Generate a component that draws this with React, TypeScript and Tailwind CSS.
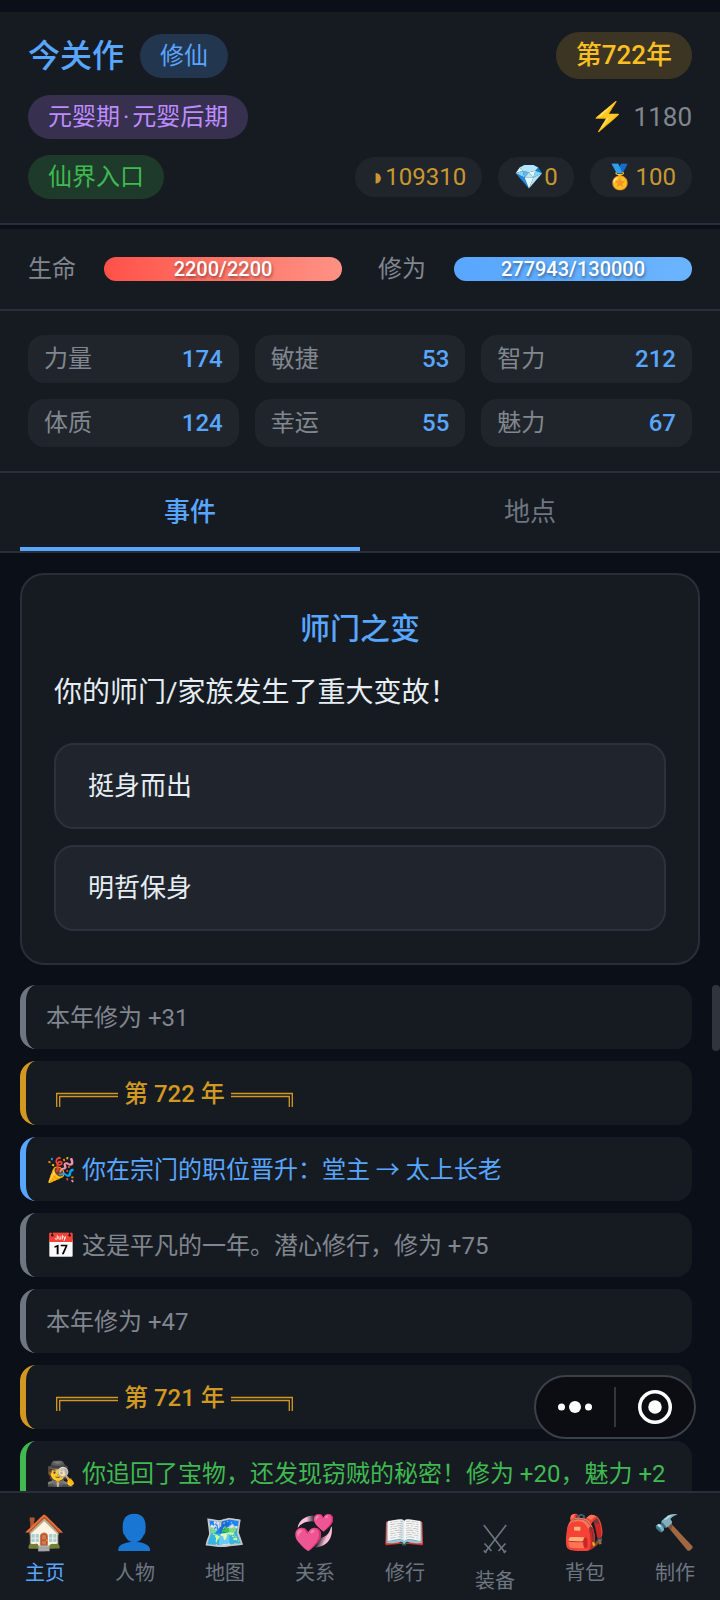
import React, { useState } from "react";

const chip = "flex h-11 items-center rounded-full px-5 text-2xl";

const wallet = [
  { icon: "◗", value: 109310, label: "灵石" },
  { icon: "💎", value: 0, label: "仙玉" },
  { icon: "🏅", value: 100, label: "声望" },
];

const stats = [
  { name: "力量", value: 174 },
  { name: "敏捷", value: 53 },
  { name: "智力", value: 212 },
  { name: "体质", value: 124 },
  { name: "幸运", value: 55 },
  { name: "魅力", value: 67 },
];

type Tone = "plain" | "year" | "info" | "good";

const tones: Record<Tone, string> = {
  plain: "border-[#6e7681] text-[#81868f]",
  year: "border-[#d29922] text-[#d29922] font-medium",
  info: "border-[#58a6ff] text-[#58a6ff]",
  good: "border-[#3fb950] text-[#3fb950]",
};

const log: { tone: Tone; icon?: string; text: string }[] = [
  { tone: "plain", text: "本年修为 +31" },
  { tone: "year", text: "第 722 年" },
  { tone: "info", icon: "🎉", text: "你在宗门的职位晋升：堂主 → 太上长老" },
  { tone: "plain", icon: "📅", text: "这是平凡的一年。潜心修行，修为 +75" },
  { tone: "plain", text: "本年修为 +47" },
  { tone: "year", text: "第 721 年" },
  { tone: "good", icon: "🕵️", text: "你追回了宝物，还发现窃贼的秘密！修为 +20，魅力 +2" },
];

const nav = [
  { icon: "🏠", label: "主页" },
  { icon: "👤", label: "人物" },
  { icon: "🗺️", label: "地图" },
  { icon: "💞", label: "关系" },
  { icon: "📖", label: "修行" },
  { icon: "swords", label: "装备" },
  { icon: "🎒", label: "背包" },
  { icon: "🔨", label: "制作" },
];

function Meter({ label, text, fill }: { label: string; text: string; fill: string }) {
  return (
    <div className="flex flex-1 items-center gap-4">
      <span className="w-15 text-2xl text-[#81868f]">{label}</span>
      <div
        role="meter"
        aria-label={label}
        aria-valuetext={text}
        aria-valuenow={100}
        className={`flex h-6 flex-1 items-center justify-center rounded-full text-xl font-medium text-white [text-shadow:1px_2px_3px_rgba(0,0,0,0.4)] ${fill}`}
      >
        {text}
      </div>
    </div>
  );
}

function Corner({ flip }: { flip?: boolean }) {
  return (
    <svg
      width="62"
      height="28"
      viewBox="0 0 62 28"
      fill="none"
      stroke="currentColor"
      strokeWidth="1.3"
      aria-hidden="true"
      className={`shrink-0 ${flip ? "-scale-x-100" : ""}`}
    >
      <path d="M62 13.5H0.7V27M62 16.5H3.7V27" />
    </svg>
  );
}

function Swords() {
  return (
    <svg width="24" height="30" viewBox="0 0 24 30" fill="none" stroke="currentColor" strokeWidth="1.6" aria-hidden="true">
      <path d="M0.8 1L22 28.5M23.2 1L2 28.5" />
      <path d="M1.5 19.5L8.5 27M22.5 19.5L15.5 27" />
      <path d="M0.8 26.5L3.2 28.8M23.2 26.5L20.8 28.8" />
    </svg>
  );
}

export default function App() {
  const [tab, setTab] = useState("事件");
  const [page, setPage] = useState("主页");

  return (
    <div className="flex h-screen flex-col bg-[#0b0f17] pt-3 font-['Roboto','Noto_Sans_CJK_SC','Noto_Color_Emoji',sans-serif] text-[#e6edf3]">
      <header className="flex flex-col gap-4 border-b-2 border-[#2a2f37] bg-[#161b22] px-7 pt-5 pb-6">
        <div className="flex items-center justify-between">
          <div className="flex items-center gap-4">
            <h1 className="text-[32px] leading-10 font-medium text-[#58a6ff]">今关作</h1>
            <span className={`${chip} bg-[#23364f] text-[#58a6ff]`}>修仙</span>
          </div>
          <span className="flex h-[47px] items-center rounded-full bg-[#3d3523] px-5 text-[26px] font-medium text-[#fbbf24]">第722年</span>
        </div>
        <div className="flex items-center justify-between">
          <span className={`${chip} bg-[#37304e] text-[#bc8cff]`}>
            元婴期<span className="px-[3px]">·</span>元婴后期
          </span>
          <span className="flex items-center gap-2 text-[26px] text-[#81868f]">
            <span className="text-[28px]">⚡</span>1180
          </span>
        </div>
        <div className="flex items-center justify-between">
          <span className={`${chip} bg-[#1e3a2b] text-[#3fb950]`}>仙界入口</span>
          <div className="flex gap-4">
            {wallet.map((w) => (
              <span key={w.label} title={w.label} className="flex h-10 items-center rounded-full bg-[#20252c] px-4 text-2xl text-[#c9972f]">
                <span>{w.icon}</span>
                {w.value}
              </span>
            ))}
          </div>
        </div>
      </header>

      <section className="mt-1 flex gap-9 border-b-2 border-[#2a2f37] bg-[#161b22] px-7 py-6">
        <Meter label="生命" text="2200/2200" fill="bg-linear-to-r from-[#ff5149] to-[#ff9184]" />
        <Meter label="修为" text="277943/130000" fill="bg-linear-to-r from-[#58a6ff] to-[#6ab4ff]" />
      </section>

      <dl className="grid grid-cols-3 gap-4 border-b-2 border-[#2a2f37] bg-[#161b22] px-7 py-6">
        {stats.map((s) => (
          <div key={s.name} className="flex h-12 items-center justify-between rounded-2xl bg-[#20252c] px-4 text-2xl">
            <dt className="text-[#81868f]">{s.name}</dt>
            <dd className="font-medium text-[#58a6ff]">{s.value}</dd>
          </div>
        ))}
      </dl>

      <div role="tablist" className="flex border-b-2 border-[#2a2f37] bg-[#161b22] px-5">
        {["事件", "地点"].map((t) => (
          <button
            key={t}
            role="tab"
            aria-selected={tab === t}
            onClick={() => setTab(t)}
            className={`h-[78px] flex-1 border-b-4 pt-1 text-[26px] ${
              tab === t ? "border-[#58a6ff] font-medium text-[#58a6ff]" : "border-transparent text-[#6e7681]"
            }`}
          >
            {t}
          </button>
        ))}
      </div>

      <main className="flex min-h-0 flex-1 flex-col gap-5 pt-5">
        <section className="mx-5 flex flex-col rounded-3xl border-2 border-[#2a2f37] bg-[#161b22] p-8">
          <h2 className="text-center text-3xl leading-11 font-medium text-[#58a6ff]">师门之变</h2>
          <p className="mt-4 text-[28px] leading-13">你的师门/家族发生了重大变故！</p>
          <div className="mt-6 flex flex-col gap-4">
            {["挺身而出", "明哲保身"].map((c) => (
              <button key={c} className="h-[86px] rounded-[20px] border-2 border-[#2d323a] bg-[#20252d] px-8 text-left text-[26px]">
                {c}
              </button>
            ))}
          </div>
        </section>

        <div className="relative flex min-h-0 flex-1 flex-col">
          <ul className="flex min-h-0 flex-1 flex-col gap-3 overflow-y-auto pr-7 pl-5 [scrollbar-width:none]">
            {log.map((e, i) => (
              <li
                key={i}
                className={`flex h-16 shrink-0 items-center gap-1.5 rounded-2xl border-l-6 bg-[#161b22] px-5 pt-0.5 text-2xl whitespace-nowrap ${tones[e.tone]}`}
              >
                {e.icon && <span>{e.icon}</span>}
                {e.tone === "year" ? (
                  <span className="flex items-center gap-1.5 pl-2.5">
                    <Corner />
                    {e.text}
                    <Corner flip />
                  </span>
                ) : (
                  <span>{e.text}</span>
                )}
              </li>
            ))}
          </ul>
          <span className="absolute top-0 right-0 h-[66px] w-2 rounded-full bg-[#30353d]" />
        </div>
      </main>

      <nav className="flex h-[109px] shrink-0 border-t-2 border-[#2a2f37] bg-[#161b22]">
        {nav.map((n) => (
          <button
            key={n.label}
            onClick={() => setPage(n.label)}
            className={`flex flex-1 flex-col items-center gap-1.5 pt-5 text-xl ${page === n.label ? "text-[#58a6ff]" : "text-[#6e7681]"}`}
          >
            {n.icon === "swords" ? (
              <span className="flex h-12 items-center pt-1">
                <Swords />
              </span>
            ) : (
              <span className="flex h-10 items-center text-[34px]">{n.icon}</span>
            )}
            <span>{n.label}</span>
          </button>
        ))}
      </nav>

      <div className="fixed right-6 bottom-[161px] flex h-16 w-[162px] items-center rounded-full border-2 border-[#3c4047] bg-[#0b0d13] text-white">
        <button aria-label="更多" className="flex flex-1 justify-center">
          <svg width="36" height="14" viewBox="0 0 36 14" fill="currentColor">
            <circle cx="4.5" cy="7" r="3.5" />
            <circle cx="18" cy="7" r="6" />
            <circle cx="31.5" cy="7" r="3.5" />
          </svg>
        </button>
        <span className="h-10 w-0.5 bg-[#33363c]" />
        <button aria-label="关闭" className="flex flex-1 justify-center">
          <svg width="34" height="34" viewBox="0 0 34 34" fill="none">
            <circle cx="17" cy="17" r="15.25" stroke="currentColor" strokeWidth="3.5" />
            <circle cx="17" cy="17" r="6.75" fill="currentColor" />
          </svg>
        </button>
      </div>
    </div>
  );
}
